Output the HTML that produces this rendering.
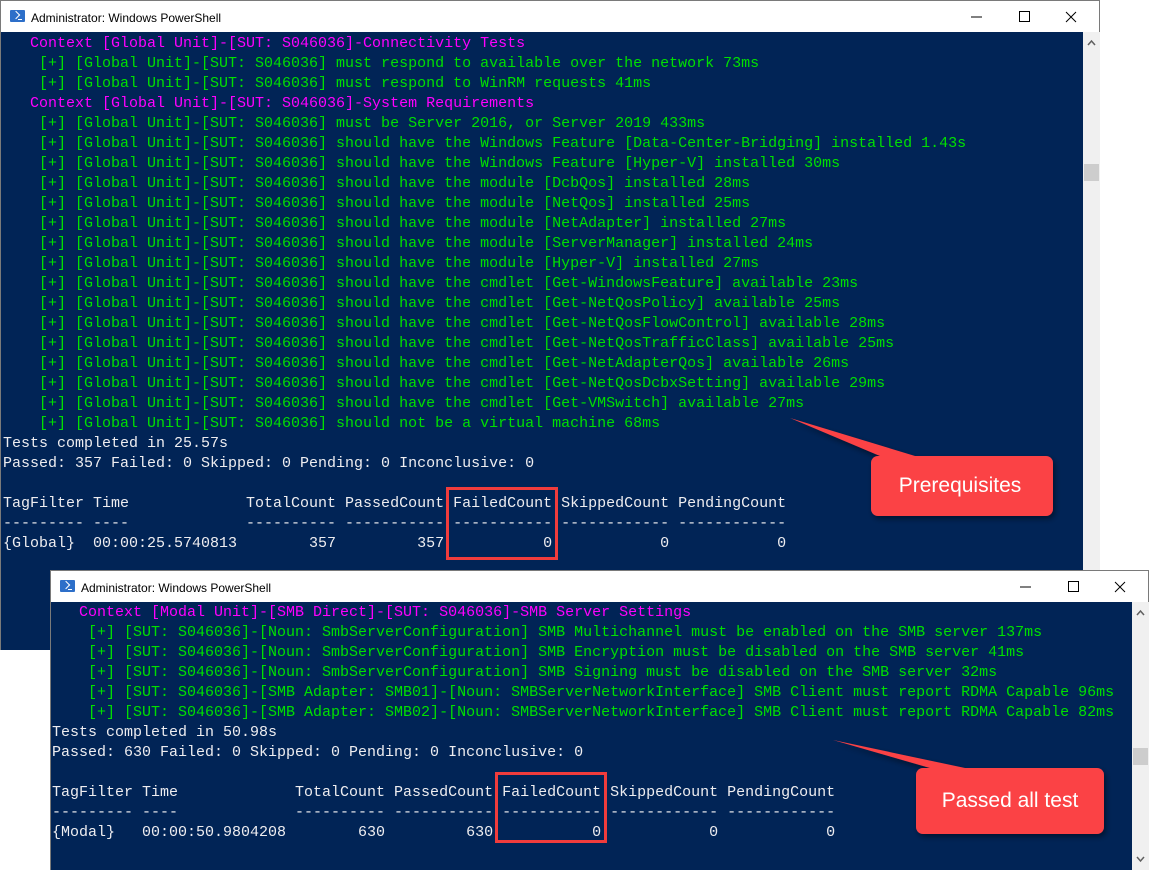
<!DOCTYPE html>
<html><head><meta charset="utf-8"><style>
*{margin:0;padding:0;box-sizing:border-box}
body{width:1150px;height:871px;background:#fff;position:relative;overflow:hidden;font-family:"Liberation Sans",sans-serif}
.win{position:absolute;background:#fff;border:1px solid #7a7a7a}
.title{position:absolute;left:0;top:0;right:0;height:31px;background:#fff;font-size:12px;color:#000}
.title .t{position:absolute;left:30px;top:10px}
.title .ic{position:absolute;left:9px;top:9px;width:15px;height:12px;background:#2d6fc9;border-radius:1px}
.title .ic:before{content:"";position:absolute;left:3px;top:2px;width:5px;height:5px;border-right:1.5px solid #fff;border-bottom:1.5px solid #fff;transform:rotate(-45deg)}
.title .ic:after{content:"";position:absolute;left:8px;top:9px;width:4px;height:1px;background:#fff}
.con{position:absolute;background:#012456;overflow:hidden}
pre{font-family:"Liberation Mono",monospace;font-size:15px;line-height:20px;color:#eeedf0;position:absolute;white-space:pre}
.m{color:#ff00ff}.g{color:#00e000}
.sb{position:absolute;background:#f0f0f0}
.box{position:absolute;border:3px solid #f03c3c}
</style></head><body>

<div class="win" style="left:0;top:0;width:1100px;height:650px">
 <div class="title"><div class="ic"></div><div class="t">Administrator: Windows PowerShell</div>
  <svg style="position:absolute;right:0;top:0" width="140" height="31"><line x1="12" y1="16" x2="23" y2="16" stroke="#000"/><rect x="60.5" y="10.5" width="10" height="10" fill="none" stroke="#000"/><path d="M107 11l10 10M117 11l-10 10" stroke="#000"/></svg>
 </div>
 <div class="con" style="left:0;top:31px;width:1082px;height:618px">
<pre style="left:2px;top:2px"><span class="m">   Context [Global Unit]-[SUT: S046036]-Connectivity Tests</span>
<span class="g">    [+] [Global Unit]-[SUT: S046036] must respond to available over the network 73ms</span>
<span class="g">    [+] [Global Unit]-[SUT: S046036] must respond to WinRM requests 41ms</span>
<span class="m">   Context [Global Unit]-[SUT: S046036]-System Requirements</span>
<span class="g">    [+] [Global Unit]-[SUT: S046036] must be Server 2016, or Server 2019 433ms</span>
<span class="g">    [+] [Global Unit]-[SUT: S046036] should have the Windows Feature [Data-Center-Bridging] installed 1.43s</span>
<span class="g">    [+] [Global Unit]-[SUT: S046036] should have the Windows Feature [Hyper-V] installed 30ms</span>
<span class="g">    [+] [Global Unit]-[SUT: S046036] should have the module [DcbQos] installed 28ms</span>
<span class="g">    [+] [Global Unit]-[SUT: S046036] should have the module [NetQos] installed 25ms</span>
<span class="g">    [+] [Global Unit]-[SUT: S046036] should have the module [NetAdapter] installed 27ms</span>
<span class="g">    [+] [Global Unit]-[SUT: S046036] should have the module [ServerManager] installed 24ms</span>
<span class="g">    [+] [Global Unit]-[SUT: S046036] should have the module [Hyper-V] installed 27ms</span>
<span class="g">    [+] [Global Unit]-[SUT: S046036] should have the cmdlet [Get-WindowsFeature] available 23ms</span>
<span class="g">    [+] [Global Unit]-[SUT: S046036] should have the cmdlet [Get-NetQosPolicy] available 25ms</span>
<span class="g">    [+] [Global Unit]-[SUT: S046036] should have the cmdlet [Get-NetQosFlowControl] available 28ms</span>
<span class="g">    [+] [Global Unit]-[SUT: S046036] should have the cmdlet [Get-NetQosTrafficClass] available 25ms</span>
<span class="g">    [+] [Global Unit]-[SUT: S046036] should have the cmdlet [Get-NetAdapterQos] available 26ms</span>
<span class="g">    [+] [Global Unit]-[SUT: S046036] should have the cmdlet [Get-NetQosDcbxSetting] available 29ms</span>
<span class="g">    [+] [Global Unit]-[SUT: S046036] should have the cmdlet [Get-VMSwitch] available 27ms</span>
<span class="g">    [+] [Global Unit]-[SUT: S046036] should not be a virtual machine 68ms</span>
Tests completed in 25.57s
Passed: 357 Failed: 0 Skipped: 0 Pending: 0 Inconclusive: 0

TagFilter Time             TotalCount PassedCount FailedCount SkippedCount PendingCount
--------- ----             ---------- ----------- ----------- ------------ ------------
{Global}  00:00:25.5740813        357         357           0            0            0</pre>
 </div>
 <div class="sb" style="left:1082px;top:31px;width:17px;height:618px"><svg width="17" height="20"><path d="M5 13l3.5-4 3.5 4" stroke="#606060" stroke-width="1.5" fill="none"/></svg><div style="position:absolute;left:1px;top:132px;width:15px;height:17px;background:#cdcdcd"></div></div>
</div>
<div class="box" style="left:446px;top:487px;width:112px;height:73px"></div>

<div class="win" style="left:50px;top:570px;width:1099px;height:300px">
 <div class="title"><div class="ic"></div><div class="t">Administrator: Windows PowerShell</div>
  <svg style="position:absolute;right:0;top:0" width="140" height="31"><line x1="12" y1="16" x2="23" y2="16" stroke="#000"/><rect x="60.5" y="10.5" width="10" height="10" fill="none" stroke="#000"/><path d="M107 11l10 10M117 11l-10 10" stroke="#000"/></svg>
 </div>
 <div class="con" style="left:0;top:31px;width:1081px;height:268px">
<pre style="left:1px;top:1px"><span class="m">   Context [Modal Unit]-[SMB Direct]-[SUT: S046036]-SMB Server Settings</span>
<span class="g">    [+] [SUT: S046036]-[Noun: SmbServerConfiguration] SMB Multichannel must be enabled on the SMB server 137ms</span>
<span class="g">    [+] [SUT: S046036]-[Noun: SmbServerConfiguration] SMB Encryption must be disabled on the SMB server 41ms</span>
<span class="g">    [+] [SUT: S046036]-[Noun: SmbServerConfiguration] SMB Signing must be disabled on the SMB server 32ms</span>
<span class="g">    [+] [SUT: S046036]-[SMB Adapter: SMB01]-[Noun: SMBServerNetworkInterface] SMB Client must report RDMA Capable 96ms</span>
<span class="g">    [+] [SUT: S046036]-[SMB Adapter: SMB02]-[Noun: SMBServerNetworkInterface] SMB Client must report RDMA Capable 82ms</span>
Tests completed in 50.98s
Passed: 630 Failed: 0 Skipped: 0 Pending: 0 Inconclusive: 0

TagFilter Time             TotalCount PassedCount FailedCount SkippedCount PendingCount
--------- ----             ---------- ----------- ----------- ------------ ------------
{Modal}   00:00:50.9804208        630         630           0            0            0</pre>
 </div>
 <div class="sb" style="left:1081px;top:31px;width:17px;height:268px"><svg width="17" height="20"><path d="M5 13l3.5-4 3.5 4" stroke="#606060" stroke-width="1.5" fill="none"/></svg><div style="position:absolute;left:1px;top:146px;width:15px;height:17px;background:#cdcdcd"></div><svg style="position:absolute;bottom:0;left:0" width="17" height="20"><path d="M5 7l3.5 4 3.5-4" stroke="#606060" stroke-width="1.5" fill="none"/></svg></div>
</div>
<div class="box" style="left:495px;top:772px;width:112px;height:71px"></div>

<svg style="position:absolute;left:0;top:0" width="1150" height="871">
 <defs><filter id="sh" x="-20%" y="-20%" width="140%" height="150%"><feDropShadow dx="2" dy="3" stdDeviation="3" flood-opacity="0.45"/></filter></defs>
 <g filter="url(#sh)" fill="#fb4245">
  <path d="M790 418 L915 456 L880 456 Z"/>
  <rect x="871" y="456" width="182" height="60" rx="7"/>
  <path d="M833 740 L965 768 L930 768 Z"/>
  <rect x="916" y="768" width="188" height="66" rx="7"/>
 </g>
 <text x="960" y="492" text-anchor="middle" font-family="Liberation Sans,sans-serif" font-size="21" fill="#fff">Prerequisites</text>
 <text x="1010" y="807" text-anchor="middle" font-family="Liberation Sans,sans-serif" font-size="21" fill="#fff">Passed all test</text>
</svg>
</body></html>
